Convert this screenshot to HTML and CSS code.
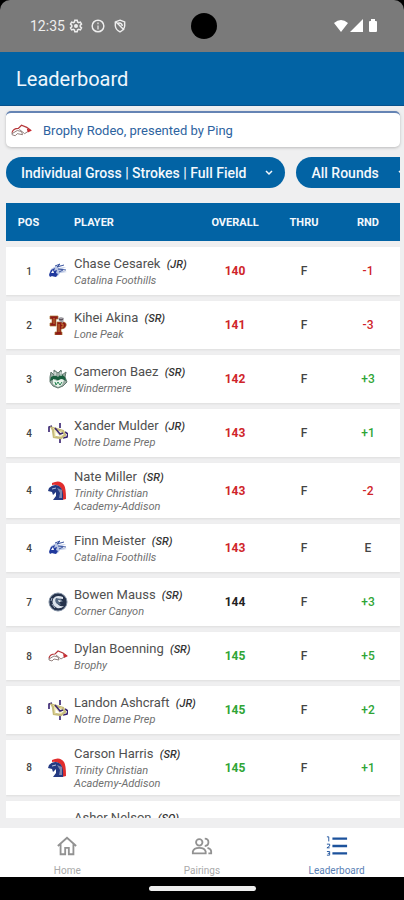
FILE: index.html
```html
<!DOCTYPE html>
<html lang="en">
<head>
<meta charset="utf-8">
<meta name="viewport" content="width=device-width, initial-scale=1">
<title>Leaderboard</title>
<link rel="stylesheet" href="styles.css">
</head>
<body>
<svg class="sprite" aria-hidden="true">
  <symbol id="foothills" viewBox="0 0 20 20">
    <path d="M1 13 3 8l5-3 5-1-3 3 8-1-6 3 7 2-7 1-2 3-3 1-4-1z" fill="#b9c6e4"/>
    <path d="m1 14 2-5 4-2-1 3 3-1-1 3 2 1-2 3-4-1-2 1z" fill="#20399d"/>
    <path d="m7 5 5-2-3 3 7-2M10 8l8 1M11 11l4-2" fill="none" stroke="#3b559f"/>
    <path d="m3 12 2-3 1 3z" fill="#fff"/>
  </symbol>
  <symbol id="lonepeak" viewBox="0 0 20 20">
    <path d="M2 1h8v3H8v7H2V8h2V4H2zM9 7h7q3 1 2 4-1 3-5 3v3h1v3H7v-3h2z" fill="#8d1a18" stroke="#a9742f" stroke-width=".7"/>
    <path d="M6 3v6M11 9v8M13 9h2v3h-2" fill="none" stroke="#d79b3b" stroke-width=".8"/>
    <path d="m10 3 3-1 3 1-1 5-4-2z" fill="#a5a2a7"/>
    <path d="m11 4 2 1 2-1" fill="none" stroke="#443642"/>
  </symbol>
  <symbol id="windermere" viewBox="0 0 20 20">
    <path d="m2 8 1-5 3 3V1l4 3 3-3 1 5 4-3-1 5 2 5-4 4-5 2-5-2-3-4z" fill="#9aaba3" stroke="#637b70"/>
    <path d="m3 8 4-2 3 2 3-3 4 3 1 4-4-2-3 2-4-2-5 2z" fill="#185e3d"/>
    <path d="m5 10 4 2 4-2 3 1-2 5-4 2-5-3z" fill="#e8f4eb"/>
    <path d="m7 13 1 3 2-3 2 3 2-3" fill="none" stroke="#268353"/>
    <path d="M7 3v4M13 3v4" stroke="#fff"/>
  </symbol>
  <symbol id="notredame" viewBox="0 0 20 20">
    <path d="M1 9V4l3-1M12 0v5M12 15v5M17 9l3 2-1 3-4 1" fill="none" stroke="#35206f" stroke-width="1.6"/>
    <path d="m4 5 4 1 7 2 2 4-4 3-7-1-1-7z" fill="none" stroke="#c6bb7c" stroke-width="2.4"/>
    <path d="m5 5 8 9V7M7 14V7" fill="none" stroke="#eee2a1"/>
    <path d="m7 5 5 6 3-1" fill="none" stroke="#3d2873" stroke-width="1.6"/>
  </symbol>
  <symbol id="trinity" viewBox="0 0 20 20">
    <path d="M4 2q8-4 12 2 2 3 2 14l-4 1V9Q11 3 4 4z" fill="#e12d2d"/>
    <path d="M1 7q5-5 10-2 5 3 4 14H5l3-4v-4l-3 3-1-3-4-1z" fill="#243a82"/>
    <path d="m9 7 3 5-1 5h3V9z" fill="#7b87ae"/>
    <path d="m4 8 4-1" stroke="#b7c2de"/>
  </symbol>
  <symbol id="canyon" viewBox="0 0 20 20">
    <circle cx="10" cy="10" r="9" fill="#25324b" stroke="#8290a4"/>
    <path d="M15 5q-7-3-10 2-2 6 4 9 4 1 7-2-6 1-7-4 0-4 6-3z" fill="#dce3ec"/>
    <path d="m8 6 5 1 2 3-4-1 2 4-4-1q-3-3-1-6z" fill="#536780"/>
    <path d="m10 8 4 1-3 1" fill="#fff"/>
    <path d="M4 6 3 9M4 12l3 4" stroke="#a4b1c2"/>
  </symbol>
  <symbol id="brophy" viewBox="0 0 20 20">
    <path d="M1 12q1-4 6-4l3-3 5 2 4 3" fill="none" stroke="#b5373a" stroke-width="1.200"/>
    <path d="m1 13 5-3 4 1 1 3-5-1-2 2M8 9l5 4 3-2M1 12v2l3 1" fill="none" stroke="#8b7774" stroke-width=".9"/>
    <path d="m15 8 5 2-4 2z" fill="#c92a31"/>
  </symbol>
</svg>

<header class="status">
  <div class="status-left">
    <span>12:35</span>
    <svg viewBox="0 0 24 24" aria-hidden="true"><path d="m10 2-.6 3-2 1.200L4.500 5.200l-2 3.600L4.800 11v2l-2.300 2.200 2 3.600 2.900-1 2 1.200.6 3h4l.6-3 2-1.200 2.900 1 2-3.600-2.300-2.200v-2l2.300-2.200-2-3.600-2.900 1-2-1.200-.6-3z" fill="none" stroke="currentColor" stroke-width="2.500"/><circle cx="12" cy="12" r="3.500" fill="currentColor"/></svg>
    <svg viewBox="0 0 24 24" aria-hidden="true"><circle cx="12" cy="12" r="10" fill="none" stroke="currentColor" stroke-width="2.500"/><path d="M11 6h2v3h-2zM11 11h2v7h-2z" fill="currentColor"/></svg>
    <svg viewBox="0 0 24 24" aria-hidden="true"><path d="m12 2 8 3v7q-1 7-8 10-7-3-8-10V5zM4 4l15 15M9 7q6-1 7 5" fill="none" stroke="currentColor" stroke-width="2.500"/></svg>
  </div>
  <span class="camera"></span>
  <svg class="signals" viewBox="0 0 44 14" aria-hidden="true"><path d="M0 4Q7-2 14 4L7 13zM16 13 29 0v13zM35 3q0-1 1-1h1V0h4v2h1q1 0 1 1v9q0 1-1 1h-6q-1 0-1-1z" fill="#fff"/></svg>
</header>
<div class="appbar"><h1>Leaderboard</h1></div>

<main>
  <a class="event" href="#"><svg aria-hidden="true"><use href="#brophy"/></svg><span>Brophy Rodeo, presented by Ping</span></a>
  <div class="filters">
    <button type="button">Individual Gross | Strokes | Full Field <svg viewBox="0 0 10 10" aria-hidden="true"><path d="m2 3 3 3 3-3"/></svg></button>
    <button type="button">All Rounds <svg viewBox="0 0 10 10" aria-hidden="true"><path d="m2 3 3 3 3-3"/></svg></button>
  </div>
  <div class="board">
    <table>
      <colgroup><col class="c-pos"><col class="c-logo"><col><col class="c-overall"><col class="c-thru"><col class="c-rnd"></colgroup>
      <thead><tr><th>POS</th><th></th><th class="player">PLAYER</th><th>OVERALL</th><th>THRU</th><th>RND</th></tr></thead>
      <tbody>
        <tr><td class="pos">1</td><td class="logo"><svg aria-hidden="true"><use href="#foothills"/></svg></td><td class="player"><div class="name">Chase Cesarek <i>(JR)</i></div><div class="school">Catalina Foothills</div></td><td class="under">140</td><td>F</td><td class="under">-1</td></tr>
        <tr><td class="pos">2</td><td class="logo"><svg aria-hidden="true"><use href="#lonepeak"/></svg></td><td class="player"><div class="name">Kihei Akina <i>(SR)</i></div><div class="school">Lone Peak</div></td><td class="under">141</td><td>F</td><td class="under">-3</td></tr>
        <tr><td class="pos">3</td><td class="logo"><svg aria-hidden="true"><use href="#windermere"/></svg></td><td class="player"><div class="name">Cameron Baez <i>(SR)</i></div><div class="school">Windermere</div></td><td class="under">142</td><td>F</td><td class="over">+3</td></tr>
        <tr><td class="pos">4</td><td class="logo"><svg aria-hidden="true"><use href="#notredame"/></svg></td><td class="player"><div class="name">Xander Mulder <i>(JR)</i></div><div class="school">Notre Dame Prep</div></td><td class="under">143</td><td>F</td><td class="over">+1</td></tr>
        <tr><td class="pos">4</td><td class="logo"><svg aria-hidden="true"><use href="#trinity"/></svg></td><td class="player"><div class="name">Nate Miller <i>(SR)</i></div><div class="school">Trinity Christian Academy-Addison</div></td><td class="under">143</td><td>F</td><td class="under">-2</td></tr>
        <tr><td class="pos">4</td><td class="logo"><svg aria-hidden="true"><use href="#foothills"/></svg></td><td class="player"><div class="name">Finn Meister <i>(SR)</i></div><div class="school">Catalina Foothills</div></td><td class="under">143</td><td>F</td><td>E</td></tr>
        <tr><td class="pos">7</td><td class="logo"><svg aria-hidden="true"><use href="#canyon"/></svg></td><td class="player"><div class="name">Bowen Mauss <i>(SR)</i></div><div class="school">Corner Canyon</div></td><td class="even">144</td><td>F</td><td class="over">+3</td></tr>
        <tr><td class="pos">8</td><td class="logo"><svg aria-hidden="true"><use href="#brophy"/></svg></td><td class="player"><div class="name">Dylan Boenning <i>(SR)</i></div><div class="school">Brophy</div></td><td class="over">145</td><td>F</td><td class="over">+5</td></tr>
        <tr><td class="pos">8</td><td class="logo"><svg aria-hidden="true"><use href="#notredame"/></svg></td><td class="player"><div class="name">Landon Ashcraft <i>(JR)</i></div><div class="school">Notre Dame Prep</div></td><td class="over">145</td><td>F</td><td class="over">+2</td></tr>
        <tr><td class="pos">8</td><td class="logo"><svg aria-hidden="true"><use href="#trinity"/></svg></td><td class="player"><div class="name">Carson Harris <i>(SR)</i></div><div class="school">Trinity Christian Academy-Addison</div></td><td class="over">145</td><td>F</td><td class="over">+1</td></tr>
        <tr><td></td><td></td><td class="player"><div class="name">Asher Nelson <i>(SO)</i></div><div class="school"></div></td><td></td><td></td><td></td></tr>
      </tbody>
    </table>
  </div>
</main>

<nav>
  <a href="#"><svg viewBox="0 0 24 24" aria-hidden="true"><path d="M2 12 12 3l10 9M5 10v11h5v-7h4v7h5V10"/></svg>Home</a>
  <a href="#"><svg viewBox="0 0 24 24" aria-hidden="true"><circle cx="9" cy="8" r="3.500"/><path d="M2 20v-2q1-4 7-4t7 4v2zM15 4q4 0 4 4t-4 4M18 14q4 1 4 4v2h-3"/></svg>Pairings</a>
  <a href="#" class="active" aria-current="page"><svg viewBox="0 0 24 24" aria-hidden="true"><path d="M7 4h16M7 12h16M7 20h16"/><path class="thin" d="M1 2h2v5M1 10h3v2l-3 2h3M1 18h3v4H1M2 20h2"/></svg>Leaderboard</a>
</nav>
<footer class="gesture"><span></span></footer>
</body>
</html>
```
FILE: styles.css
```css
* { box-sizing: border-box; }

body {
  margin: 0;
  height: 100vh;
  display: flex;
  flex-direction: column;
  overflow: hidden;
  background: #000;
  color: #444;
  font-family: Roboto, "Liberation Sans", sans-serif;
}

a { color: inherit; text-decoration: none; }
svg { display: block; flex: none; }
.sprite { position: absolute; width: 0; height: 0; }

.status {
  flex: none;
  height: 52px;
  padding: 0 26px 0 30px;
  display: grid;
  grid-template-columns: 1fr auto 1fr;
  align-items: center;
  background: #7a7a7a;
  border-radius: 10px 10px 0 0;
  color: #eee;
  font-size: 14px;
}
.status-left { display: flex; align-items: center; gap: 8px; }
.status-left span { margin-right: -4px; }
.status-left svg { width: 14px; height: 14px; }
.camera { width: 26px; height: 26px; border-radius: 50%; background: #000; }
.signals { width: 44px; height: 14px; justify-self: end; }

.appbar {
  flex: none;
  height: 54px;
  padding: 0 16px;
  display: flex;
  align-items: center;
  background: #0263a4;
  border-bottom: 1px solid #07528d;
}
h1 { margin: 0; color: #eef6fc; font-size: 20px; font-weight: 400; }

main {
  flex: 1;
  min-height: 0;
  padding: 5px 4px 10px 6px;
  display: flex;
  flex-direction: column;
  overflow: hidden;
  background: #efeff0;
}

.event {
  flex: none;
  height: 36px;
  margin-bottom: 10px;
  padding: 0 5px;
  display: flex;
  align-items: center;
  gap: 11px;
  background: #fff;
  border-top: 2px solid #6584b4;
  border-radius: 5px;
  box-shadow: 0 1px 3px #bbb;
  color: #2d639f;
  font-size: 13px;
  font-weight: 400;
}
.event svg { width: 21px; height: 21px; }

.filters { flex: none; display: flex; gap: 11px; overflow: hidden; margin-bottom: 15px; }
.filters button {
  flex: none;
  height: 31px;
  padding: 0 11px 0 15px;
  display: flex;
  align-items: center;
  gap: 18px;
  border: 0;
  border-radius: 16px;
  background: #0263a4;
  color: #f4f8fc;
  font: 500 14px Roboto, "Liberation Sans", sans-serif;
  white-space: nowrap;
}
.filters svg { width: 10px; height: 10px; }
.filters path { fill: none; stroke: currentColor; stroke-width: 1.5; }

.board { flex: 1; min-height: 0; overflow: hidden; }
table {
  width: 100%;
  table-layout: fixed;
  border-collapse: separate;
  border-spacing: 0 6px;
  margin-top: -6px;
}
.c-pos { width: 42px; }
.c-logo { width: 26px; }
.c-overall { width: 74px; }
.c-thru { width: 64px; }
.c-rnd { width: 64px; }

th {
  height: 38px;
  padding: 0;
  background: #0263a4;
  color: #f4f8fc;
  font-size: 11px;
  font-weight: 700;
}
tbody tr { background: #fff; box-shadow: 0 1px 2px #ddd; }
td {
  height: 48px;
  padding: 0;
  text-align: center;
  font-size: 12px;
  font-weight: 500;
}
.pos { font-size: 10px; padding-left: 4px; }
th:first-child { padding-left: 3px; }
.logo svg { width: 20px; height: 20px; }
.player { text-align: left; }
td.player { padding: 6px 0 5px; }
.name { color: #505050; font-size: 13px; font-weight: 400; line-height: 16px; white-space: nowrap; }
.name i { color: #333; font-size: 11px; font-weight: 500; line-height: 1; margin-left: 3px; }
.school {
  max-width: 100px;
  min-height: 13px;
  margin-top: 2px;
  color: #707070;
  font-size: 11px;
  font-style: italic;
  font-weight: 400;
  line-height: 13px;
}
.under { color: #cf2429; }
.over { color: #2fa536; }
.even { color: #222; }
.under, .over, .even { font-weight: 700; }
td:last-child { font-weight: 500; }

nav {
  flex: none;
  height: 49px;
  display: grid;
  grid-template-columns: repeat(3, 1fr);
  overflow: hidden;
  background: #fff;
  color: #a9a9a9;
  font-size: 10px;
}
nav a {
  padding-top: 7px;
  display: flex;
  flex-direction: column;
  align-items: center;
  gap: 7px;
  line-height: 13px;
}
nav svg { width: 22px; height: 22px; fill: none; stroke: #929292; stroke-width: 2; }
nav .active { color: #5a7fb5; }
nav .active svg { stroke: #1c529c; stroke-width: 2.5; }
nav .active .thin { stroke-width: 1; }

.gesture { flex: none; height: 23px; display: flex; align-items: center; justify-content: center; }
.gesture span { width: 107px; height: 5px; border-radius: 3px; background: #eee; }
```
